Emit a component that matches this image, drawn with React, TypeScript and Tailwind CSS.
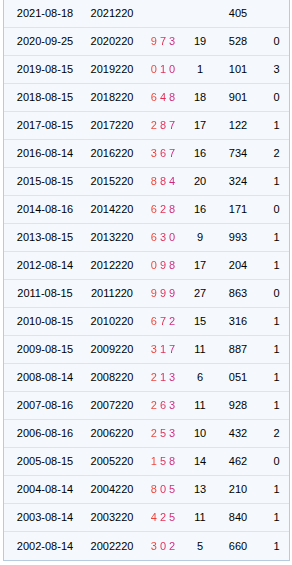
import React from 'react';

type Row = {
  date: string;
  issue: string;
  nums: string;
  sum: string;
  value: string;
  flag: string;
};

const rows: Row[] = [
  { date: '2021-08-18', issue: '2021220', nums: '', sum: '', value: '405', flag: '' },
  { date: '2020-09-25', issue: '2020220', nums: '973', sum: '19', value: '528', flag: '0' },
  { date: '2019-08-15', issue: '2019220', nums: '010', sum: '1', value: '101', flag: '3' },
  { date: '2018-08-15', issue: '2018220', nums: '648', sum: '18', value: '901', flag: '0' },
  { date: '2017-08-15', issue: '2017220', nums: '287', sum: '17', value: '122', flag: '1' },
  { date: '2016-08-14', issue: '2016220', nums: '367', sum: '16', value: '734', flag: '2' },
  { date: '2015-08-15', issue: '2015220', nums: '884', sum: '20', value: '324', flag: '1' },
  { date: '2014-08-16', issue: '2014220', nums: '628', sum: '16', value: '171', flag: '0' },
  { date: '2013-08-15', issue: '2013220', nums: '630', sum: '9', value: '993', flag: '1' },
  { date: '2012-08-14', issue: '2012220', nums: '098', sum: '17', value: '204', flag: '1' },
  { date: '2011-08-15', issue: '2011220', nums: '999', sum: '27', value: '863', flag: '0' },
  { date: '2010-08-15', issue: '2010220', nums: '672', sum: '15', value: '316', flag: '1' },
  { date: '2009-08-15', issue: '2009220', nums: '317', sum: '11', value: '887', flag: '1' },
  { date: '2008-08-14', issue: '2008220', nums: '213', sum: '6', value: '051', flag: '1' },
  { date: '2007-08-16', issue: '2007220', nums: '263', sum: '11', value: '928', flag: '1' },
  { date: '2006-08-16', issue: '2006220', nums: '253', sum: '10', value: '432', flag: '2' },
  { date: '2005-08-15', issue: '2005220', nums: '158', sum: '14', value: '462', flag: '0' },
  { date: '2004-08-14', issue: '2004220', nums: '805', sum: '13', value: '210', flag: '1' },
  { date: '2003-08-14', issue: '2003220', nums: '425', sum: '11', value: '840', flag: '1' },
  { date: '2002-08-14', issue: '2002220', nums: '302', sum: '5', value: '660', flag: '1' },
];

const App: React.FC = () => {
  return (
    <div className="w-[292px] min-h-[565px] bg-white font-['Liberation_Sans',Arial,sans-serif] text-[11px] text-black">
      <div className="ml-[3px] w-[287px] border-x border-b border-[#b7cbe0] bg-[#f5f9fd]">
        {rows.map((r, i) => (
          <div
            key={r.issue}
            className={`grid grid-cols-[82px_52px_50px_24px_52px_25px] h-[28px] items-center text-center ${
              i < rows.length - 1 ? 'border-b border-[#dde4ec]' : ''
            }`}
          >
            <span>{r.date}</span>
            <span>{r.issue}</span>
            <span>
              {r.nums && (
                <span className="bg-gradient-to-r from-[#f0452a] via-[#e6284f] to-[#c9248c] bg-clip-text text-transparent">
                  {r.nums.split('').join(' ')}
                </span>
              )}
            </span>
            <span>{r.sum}</span>
            <span>{r.value}</span>
            <span>{r.flag}</span>
          </div>
        ))}
      </div>
    </div>
  );
};

export default App;
